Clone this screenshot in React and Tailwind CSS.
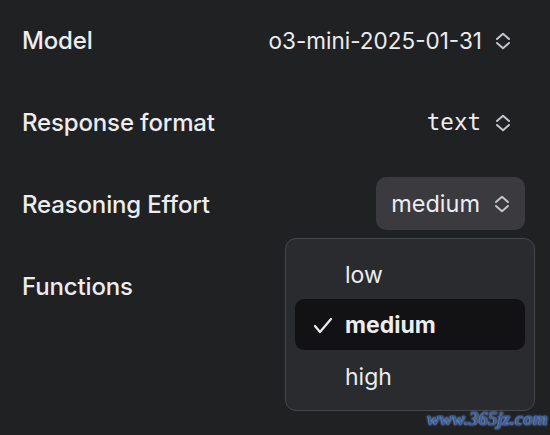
import React from 'react';

function UpDown() {
  return (
    <svg width="16" height="18" viewBox="0 0 16 18" fill="none" stroke="#c5c5ca" strokeWidth="2" strokeLinecap="round" strokeLinejoin="round">
      <path d="M2 7 L8 1.8 L14 7" />
      <path d="M2 11 L8 16.2 L14 11" />
    </svg>
  );
}

function Row({ label, children }) {
  return (
    <div className="h-[82px] flex items-center justify-between">
      <span className="text-[24px] font-medium text-[#ececf1] tracking-[-0.15px]">{label}</span>
      {children}
    </div>
  );
}

export default function App() {
  return (
    <div className="relative w-[550px] h-[435px] overflow-hidden bg-[#202123] pl-[22px] pr-[25px] font-['Inter','Noto_Sans',sans-serif]">
      <Row label="Model">
        <button className="flex items-center gap-[13px] h-[52px] px-[14px] rounded-lg text-[22.5px] text-[#ececf1]">
          o3-mini-2025-01-31
          <UpDown />
        </button>
      </Row>
      <Row label="Response format">
        <button className="flex items-center gap-[14px] h-[52px] px-[14px] rounded-lg text-[22px] text-[#ececf1]">
          <span className="font-['DejaVu_Sans_Mono',monospace] text-[22.5px]">text</span>
          <UpDown />
        </button>
      </Row>
      <Row label="Reasoning Effort">
        <button className="flex items-center gap-[14px] h-[53px] -mt-[3px] px-[15px] rounded-[10px] bg-[#3a3a3f] text-[23.5px] text-[#ececf1]">
          medium
          <UpDown />
        </button>
      </Row>
      <Row label="Functions" />

      <div className="absolute left-[285px] top-[238px] w-[250px] rounded-[11px] border border-[#46474d] bg-[#2a2b2f] p-[9px]">
        <div className="h-[51px] flex items-center pt-[3px] pl-[50px] text-[23px] text-[#ececf1]">low</div>
        <div className="h-[51px] flex items-center rounded-[9px] bg-[#121215] pl-[18px] pt-[2px] text-[23px] font-bold text-[#ececf1]">
          <svg width="20" height="17" viewBox="0 0 20 17" fill="none" stroke="#ececf1" strokeWidth="2.2" strokeLinecap="round" strokeLinejoin="round" className="mr-[12px]">
            <path d="M2 9 L7 15 L18 2" />
          </svg>
          medium
        </div>
        <div className="h-[51px] flex items-center pt-[3px] pl-[50px] text-[23px] text-[#ececf1]">high</div>
      </div>

      <div className="absolute left-[427px] top-[405px] text-[19px] font-bold italic text-[#2f5fae] font-['Liberation_Serif',serif] [text-shadow:0_0_2px_#d8dde8]">
        www.365jz.com
      </div>
    </div>
  );
}
